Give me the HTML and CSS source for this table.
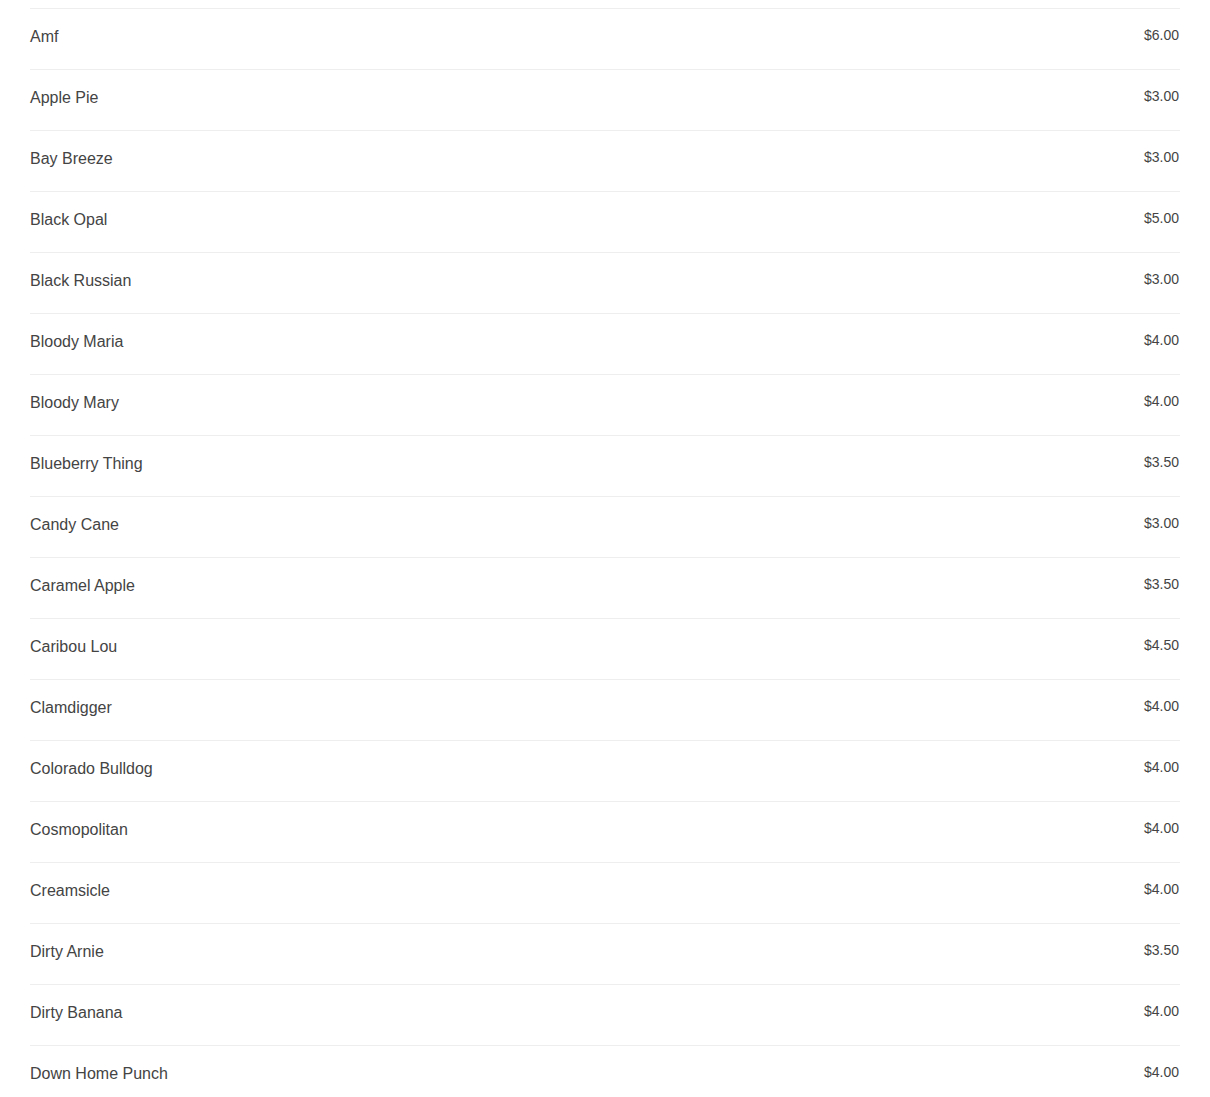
FILE: index.html
```html
<!DOCTYPE html>
<html>
<head>
<meta charset="utf-8">
<link rel="stylesheet" href="styles.css">
</head>
<body>
<ul class="menu">
  <li class="item"><span class="name">Amf</span><span class="price">$6.00</span></li>
  <li class="item"><span class="name">Apple Pie</span><span class="price">$3.00</span></li>
  <li class="item"><span class="name">Bay Breeze</span><span class="price">$3.00</span></li>
  <li class="item"><span class="name">Black Opal</span><span class="price">$5.00</span></li>
  <li class="item"><span class="name">Black Russian</span><span class="price">$3.00</span></li>
  <li class="item"><span class="name">Bloody Maria</span><span class="price">$4.00</span></li>
  <li class="item"><span class="name">Bloody Mary</span><span class="price">$4.00</span></li>
  <li class="item"><span class="name">Blueberry Thing</span><span class="price">$3.50</span></li>
  <li class="item"><span class="name">Candy Cane</span><span class="price">$3.00</span></li>
  <li class="item"><span class="name">Caramel Apple</span><span class="price">$3.50</span></li>
  <li class="item"><span class="name">Caribou Lou</span><span class="price">$4.50</span></li>
  <li class="item"><span class="name">Clamdigger</span><span class="price">$4.00</span></li>
  <li class="item"><span class="name">Colorado Bulldog</span><span class="price">$4.00</span></li>
  <li class="item"><span class="name">Cosmopolitan</span><span class="price">$4.00</span></li>
  <li class="item"><span class="name">Creamsicle</span><span class="price">$4.00</span></li>
  <li class="item"><span class="name">Dirty Arnie</span><span class="price">$3.50</span></li>
  <li class="item"><span class="name">Dirty Banana</span><span class="price">$4.00</span></li>
  <li class="item"><span class="name">Down Home Punch</span><span class="price">$4.00</span></li>
</ul>
</body>
</html>
```
FILE: styles.css
```css
html, body {
  margin: 0;
  padding: 0;
  background: #fff;
}
body {
  font-family: "Liberation Sans", Arial, sans-serif;
  color: #444;
}
.menu {
  list-style: none;
  margin: 0;
  padding: 8px 30px 0;
}
.item {
  display: flex;
  justify-content: space-between;
  align-items: flex-start;
  border-top: 1px solid #eee;
  height: 42px;
  padding-top: 18px;
}
.name {
  font-size: 16px;
  margin-top: 1px;
  color: #444;
}
.price {
  font-size: 14px;
  color: #444;
  margin-right: 1px;
}
```
